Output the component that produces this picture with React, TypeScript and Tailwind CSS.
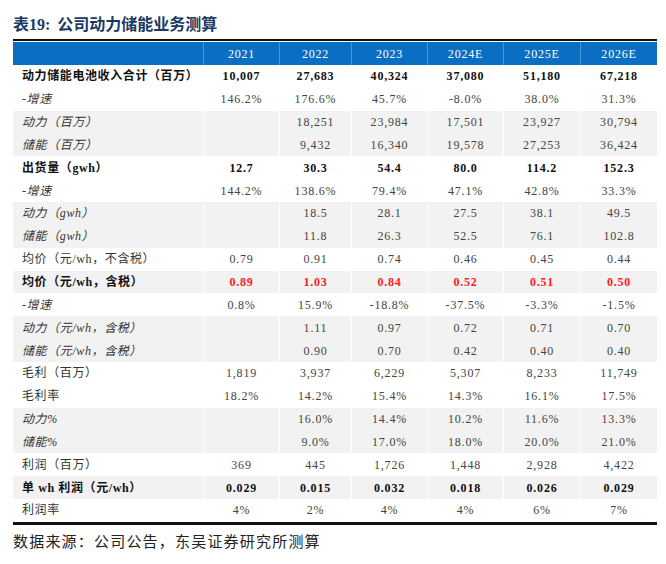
import React from 'react'

type Style = 'bold' | 'italic' | 'normal' | 'red'

interface Row {
  label: string
  values: string[]
  style: Style
  shaded: boolean
}

const years = ['2021', '2022', '2023', '2024E', '2025E', '2026E']

const rows: Row[] = [
  { label: '动力储能电池收入合计（百万）', values: ['10,007', '27,683', '40,324', '37,080', '51,180', '67,218'], style: 'bold', shaded: false },
  { label: '-增速', values: ['146.2%', '176.6%', '45.7%', '-8.0%', '38.0%', '31.3%'], style: 'italic', shaded: false },
  { label: '动力（百万）', values: ['', '18,251', '23,984', '17,501', '23,927', '30,794'], style: 'italic', shaded: true },
  { label: '储能（百万）', values: ['', '9,432', '16,340', '19,578', '27,253', '36,424'], style: 'italic', shaded: true },
  { label: '出货量（gwh）', values: ['12.7', '30.3', '54.4', '80.0', '114.2', '152.3'], style: 'bold', shaded: false },
  { label: '-增速', values: ['144.2%', '138.6%', '79.4%', '47.1%', '42.8%', '33.3%'], style: 'italic', shaded: false },
  { label: '动力（gwh）', values: ['', '18.5', '28.1', '27.5', '38.1', '49.5'], style: 'italic', shaded: true },
  { label: '储能（gwh）', values: ['', '11.8', '26.3', '52.5', '76.1', '102.8'], style: 'italic', shaded: true },
  { label: '均价（元/wh，不含税）', values: ['0.79', '0.91', '0.74', '0.46', '0.45', '0.44'], style: 'normal', shaded: false },
  { label: '均价（元/wh，含税）', values: ['0.89', '1.03', '0.84', '0.52', '0.51', '0.50'], style: 'red', shaded: true },
  { label: '-增速', values: ['0.8%', '15.9%', '-18.8%', '-37.5%', '-3.3%', '-1.5%'], style: 'italic', shaded: false },
  { label: '动力（元/wh，含税）', values: ['', '1.11', '0.97', '0.72', '0.71', '0.70'], style: 'italic', shaded: true },
  { label: '储能（元/wh，含税）', values: ['', '0.90', '0.70', '0.42', '0.40', '0.40'], style: 'italic', shaded: true },
  { label: '毛利（百万）', values: ['1,819', '3,937', '6,229', '5,307', '8,233', '11,749'], style: 'normal', shaded: false },
  { label: '毛利率', values: ['18.2%', '14.2%', '15.4%', '14.3%', '16.1%', '17.5%'], style: 'normal', shaded: false },
  { label: '动力%', values: ['', '16.0%', '14.4%', '10.2%', '11.6%', '13.3%'], style: 'italic', shaded: true },
  { label: '储能%', values: ['', '9.0%', '17.0%', '18.0%', '20.0%', '21.0%'], style: 'italic', shaded: true },
  { label: '利润（百万）', values: ['369', '445', '1,726', '1,448', '2,928', '4,422'], style: 'normal', shaded: false },
  { label: '单 wh 利润（元/wh）', values: ['0.029', '0.015', '0.032', '0.018', '0.026', '0.029'], style: 'bold', shaded: true },
  { label: '利润率', values: ['4%', '2%', '4%', '4%', '6%', '7%'], style: 'normal', shaded: false },
]

const cols = 'grid grid-cols-[190px_76px_72px_76px_76px_77px_77px]'

function TableRow({ row }: { row: Row }) {
  const labelCls =
    row.style === 'bold' || row.style === 'red'
      ? 'font-bold text-[#111]'
      : row.style === 'italic'
        ? 'italic text-[#333]'
        : 'text-[#333]'
  const valueCls =
    row.style === 'red'
      ? 'font-bold text-[#ff1a1a]'
      : row.style === 'bold'
        ? 'font-bold text-[#111]'
        : 'text-[#444]'

  return (
    <div className={`${cols} h-[22.85px] ${row.shaded ? 'bg-[#f2f2f2]' : 'bg-white'}`}>
      <div className={`flex items-center pl-[9px] whitespace-nowrap text-[12px] tracking-[0.6px] ${labelCls}`}>
        {row.label}
      </div>
      {row.values.map((v, i) => (
        <div
          key={i}
          className={`flex items-center justify-center border-l border-white text-[12px] tracking-[0.8px] ${valueCls}`}
        >
          {v}
        </div>
      ))}
    </div>
  )
}

export default function App() {
  return (
    <div className="w-[666px] h-[564px] bg-white pl-[13px] pt-[14px] font-['Liberation_Serif','Noto_Sans_CJK_SC',serif]">
      {/* Title */}
      <div className="flex items-center h-[21px] text-[16px] font-bold text-[#1b3a63]">
        <span>表19:</span>
        <span className="ml-[7px]">公司动力储能业务测算</span>
      </div>

      {/* Table */}
      <div className="mt-[4px] w-[644px] border-t-2 border-[#111]">
        <div className={`${cols} h-[23px] bg-[#0a6fc2] mt-px`}>
          <div />
          {years.map(y => (
            <div
              key={y}
              className="flex items-center justify-center border-l border-[#4a95d4] text-[12px] text-white tracking-[0.8px]"
            >
              {y}
            </div>
          ))}
        </div>
        {rows.map((r, i) => (
          <TableRow key={i} row={r} />
        ))}
        <div className="h-[3px] bg-[#111]" />
      </div>

      {/* Source */}
      <div className="mt-[6px] text-[15px] text-[#222] tracking-[1.2px]">数据来源：公司公告，东吴证券研究所测算</div>
    </div>
  )
}
